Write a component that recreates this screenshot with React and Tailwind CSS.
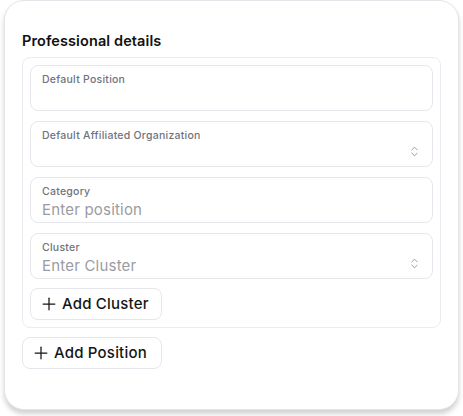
import React from "react";
import { ChevronsUpDown, Plus } from "lucide-react";

function Field({ label, placeholder, select }) {
  return (
    <div className="relative h-[46px] rounded-[8px] border border-[#e6e7ec] bg-white px-[11px] pt-[7px]">
      <div className="text-[10.5px] font-medium leading-[14px] tracking-[0.25px] text-[#70737c]">{label}</div>
      {placeholder && (
        <div className="mt-[1px] text-[15px] leading-[19px] tracking-[0.2px] text-[#9a9ca4]">{placeholder}</div>
      )}
      {select && (
        <ChevronsUpDown
          className="absolute right-[11px] top-[23px] text-[#8a8c94]"
          size={13}
          strokeWidth={1.6}
        />
      )}
    </div>
  );
}

function Btn({ children, w }) {
  return (
    <button className={`flex h-[32px] items-center gap-[3px] rounded-[8px] border border-[#e6e7ec] bg-white pl-[8px] text-[15px] font-medium tracking-[0.2px] text-[#151515] ${w}`}>
      <Plus size={20} strokeWidth={1.5} />
      <span>{children}</span>
    </button>
  );
}

export default function App() {
  return (
    <div
      className="h-[416px] w-[463px] bg-white pl-[4px]"
      style={{ fontFamily: "Inter, 'Noto Sans', sans-serif" }}
    >
      <div className="h-[410px] w-[455px] rounded-[20px] border border-[#e4e5ea] bg-white px-[17px] pt-[30px] shadow-[0_4px_5px_rgba(0,0,0,0.18)]">
        <div className="text-[14.5px] font-semibold leading-[20px] tracking-[0.1px] text-[#111]">Professional details</div>
        <div className="mt-[6px] flex flex-col gap-[10px] rounded-[8px] border border-[#ebecf0] p-[7px] pb-[7px]">
          <Field label="Default Position" />
          <Field label="Default Affiliated Organization" select />
          <Field label="Category" placeholder="Enter position" />
          <Field label="Cluster" placeholder="Enter Cluster" select />
          <div className="-mt-[1px] flex">
            <Btn w="w-[132px]">Add Cluster</Btn>
          </div>
        </div>
        <div className="mt-[9px] flex">
          <Btn w="w-[140px]">Add Position</Btn>
        </div>
      </div>
    </div>
  );
}
